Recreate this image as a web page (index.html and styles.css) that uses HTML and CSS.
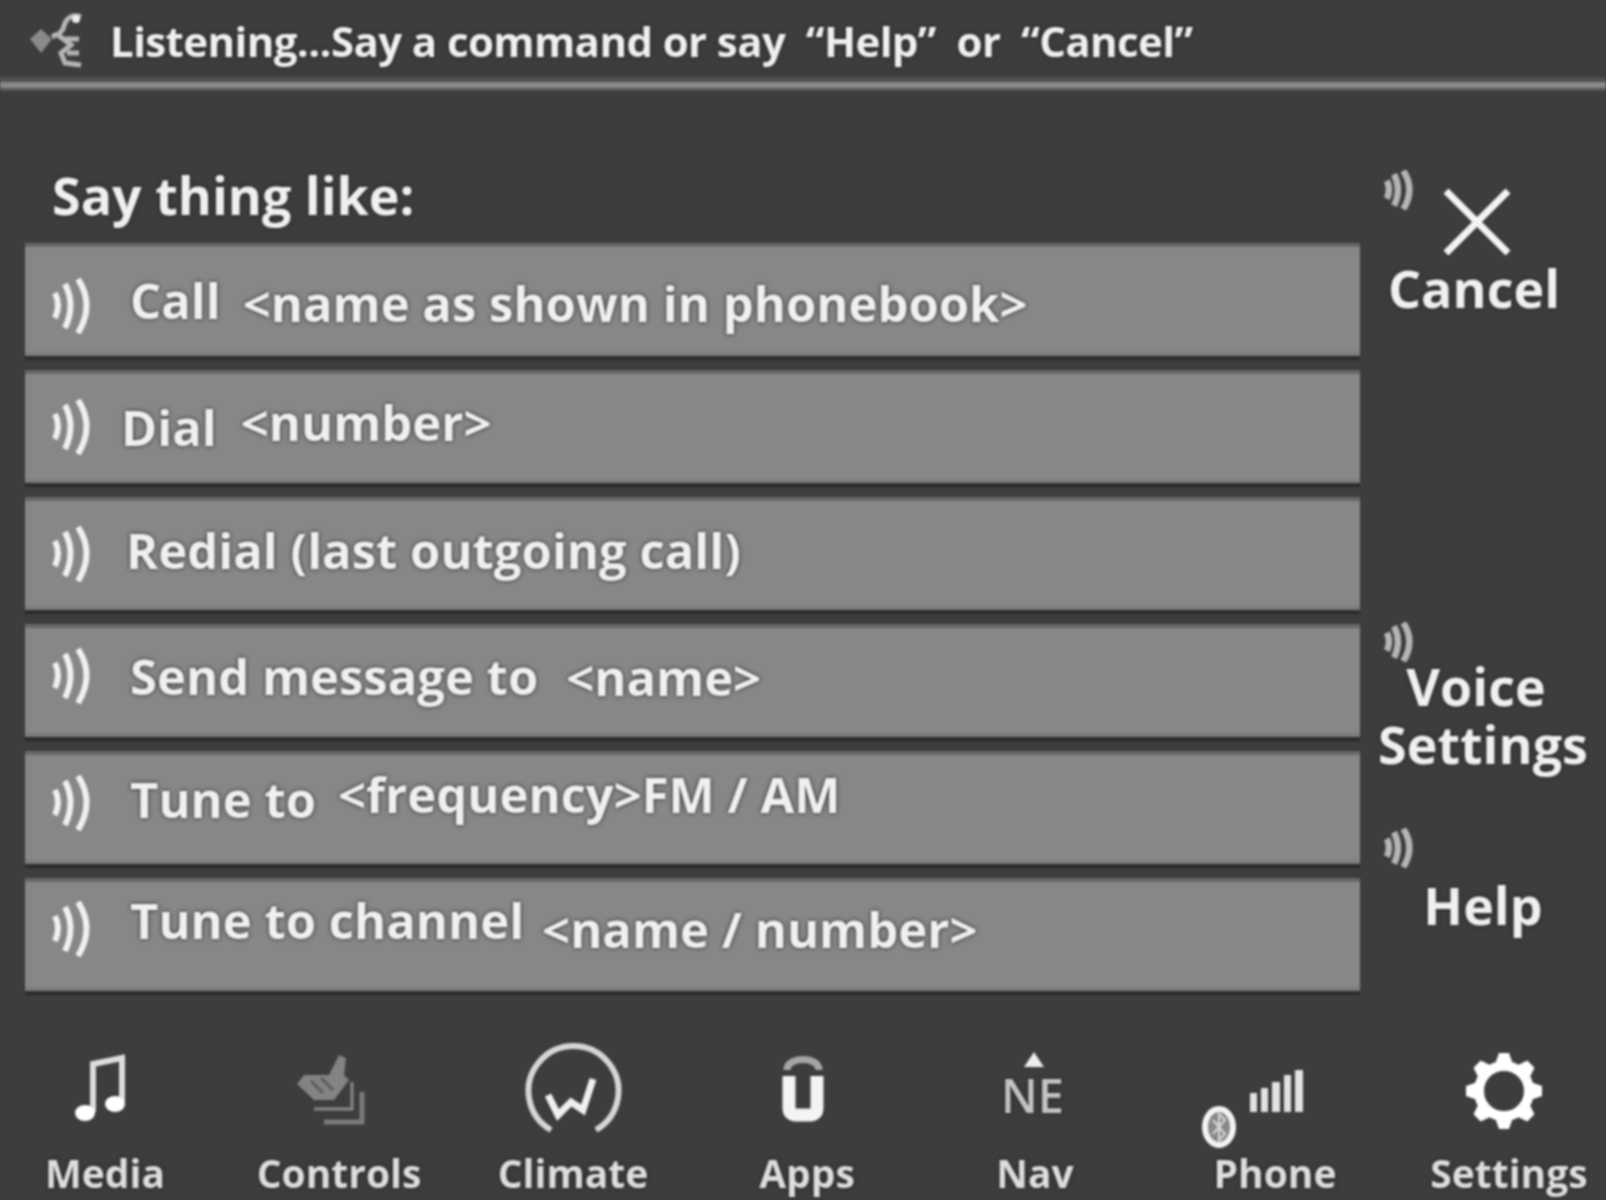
FILE: index.html
```html
<!doctype html>
<html lang="en">
    <head>
        <meta charset="UTF-8" />
        <title>Voice Command</title>
        <link rel="stylesheet" href="styles.css">
    </head>

    <body>
        <div id="screen">
            <svg width="0" height="0" class="defs">
                <symbol id="wave" viewBox="0 0 42 56">
                    <path d="M4 15 Q10 27 4 40 M14 6 Q25 27 14 50 M27 1 Q44 27 27 55" fill="none" stroke="currentColor" />
                </symbol>
            </svg>

            <div id="top">
                <svg class="listen" width="56" height="60" viewBox="0 0 56 60">
                    <path d="M1 30 L12 20 L23 30 L12 44 Z" fill="#8a8a8a" />
                    <path d="M28 25 L23 28 M52 8 Q38 3 34 20 L29 26 L42 36 L32 44 L36 54 L52 56 M36 30 H50 M38 44 H50" fill="none" stroke="#b5b5b5" stroke-width="5" />
                    <circle cx="47" cy="10" r="4" fill="#eee" />
                </svg>
                <span class="toptext">Listening...Say a command or say &nbsp;“Help” &nbsp;or &nbsp;“Cancel”</span>
            </div>
            <div id="rule"></div>

            <div id="main">
                <div id="list">
                    <h1>Say thing like:</h1>
                    <div class="bar r1">
                        <svg class="w"><use href="#wave" /></svg>
                        <span class="cmd">Call</span><span class="arg">&lt;name as shown in phonebook&gt;</span>
                    </div>
                    <div class="bar r2">
                        <svg class="w"><use href="#wave" /></svg>
                        <span class="cmd">Dial</span><span class="arg">&lt;number&gt;</span>
                    </div>
                    <div class="bar r3">
                        <svg class="w"><use href="#wave" /></svg>
                        <span class="cmd">Redial (last outgoing call)</span>
                    </div>
                    <div class="bar r4">
                        <svg class="w"><use href="#wave" /></svg>
                        <span class="cmd">Send message to</span><span class="arg">&lt;name&gt;</span>
                    </div>
                    <div class="bar r5">
                        <svg class="w"><use href="#wave" /></svg>
                        <span class="cmd">Tune to</span><span class="arg">&lt;frequency&gt;FM / AM</span>
                    </div>
                    <div class="bar r6">
                        <svg class="w"><use href="#wave" /></svg>
                        <span class="cmd">Tune to channel</span><span class="arg">&lt;name / number&gt;</span>
                    </div>
                </div>

                <div id="side">
                    <div class="sbtn cancel">
                        <svg class="sw"><use href="#wave" /></svg>
                        <svg class="x" width="68" height="68" viewBox="0 0 68 68">
                            <path d="M3 3 L65 65 M65 3 L3 65" stroke="#f4f4f4" stroke-width="7" />
                        </svg>
                        <div class="slabel">Cancel</div>
                    </div>
                    <div class="sbtn voice">
                        <svg class="sw"><use href="#wave" /></svg>
                        <div class="slabel"><span class="vline">Voice</span><br />Settings</div>
                    </div>
                    <div class="sbtn help">
                        <svg class="sw"><use href="#wave" /></svg>
                        <div class="slabel">Help</div>
                    </div>
                </div>
            </div>

            <div id="tabs">
                <div class="tab">
                    <svg class="ico" viewBox="0 0 186 96">
                        <g transform="translate(5 0)">
                            <path d="M76 72 V24 L105 18 V62" fill="none" stroke="#ddd" stroke-width="6" />
                            <ellipse cx="68" cy="73" rx="10" ry="8" fill="#fff" />
                            <ellipse cx="98" cy="64" rx="10" ry="8" fill="#fff" />
                        </g>
                    </svg>
                    Media
                </div>
                <div class="tab">
                    <svg class="ico" viewBox="0 0 186 96">
                        <g transform="translate(9 0)">
                            <path d="M84 15 L91 18 L89 35 L94 40 L79 60 L59 60 L42 44 L49 35 L74 35 Z" fill="#838383" />
                            <path d="M56 41 L68 53 M66 38 L78 50" stroke="#5c5c5c" stroke-width="3" />
                            <path d="M59 69 H97 V42" fill="none" stroke="#8a8a8a" stroke-width="3" />
                            <path d="M69 82 H107 V52" fill="none" stroke="#7b7b7b" stroke-width="5" />
                        </g>
                    </svg>
                    Controls
                </div>
                <div class="tab">
                    <svg class="ico" viewBox="0 0 186 96">
                        <g transform="translate(1 2)">
                            <path d="M70 88 A45 45 0 1 1 115 88" fill="none" stroke="#d6d6d6" stroke-width="6" />
                            <path d="M67 53 L77 73 L90 60 L102 68 L112 37" fill="none" stroke="#f0f0f0" stroke-width="7" />
                        </g>
                    </svg>
                    Climate
                </div>
                <div class="tab">
                    <svg class="ico" viewBox="0 0 186 96">
                        <g transform="translate(9 0)">
                            <path d="M64 30 C64 16 96 16 96 30" fill="none" stroke="#a5a5a5" stroke-width="7" />
                            <path d="M66 36 V68 Q66 75 73 75 H87 Q94 75 94 68 V36" fill="none" stroke="#f4f4f4" stroke-width="13" />
                        </g>
                    </svg>
                    Apps
                </div>
                <div class="tab nav">
                    <svg class="ico" viewBox="0 0 186 96">
                        <path d="M86 12 L96 27 H76 Z" fill="#eee" />
                        <text x="53" y="73" class="ne">NE</text>
                    </svg>
                    Nav
                </div>
                <div class="tab">
                    <svg class="ico" viewBox="0 0 186 96">
                        <ellipse cx="37" cy="87" rx="14" ry="18" fill="#888" stroke="#f4f4f4" stroke-width="6" />
                        <path d="M31 80 L43 94 L37 100 V74 L43 80 L31 94" fill="none" stroke="#d8d8d8" stroke-width="2" />
                        <path d="M68 72 V53 H75 V72 Z M79 72 V48 H86 V72 Z M90 72 V42 H98 V72 Z M102 72 V35 H109 V72 Z M113 72 V30 H121 V72 Z" fill="#e2e2e2" />
                    </svg>
                    Phone
                </div>
                <div class="tab">
                    <svg class="ico" viewBox="0 0 186 96">
                        <g transform="translate(13 0)">
                            <circle cx="75" cy="51" r="25" fill="none" stroke="#fff" stroke-width="10" />
                            <g fill="#fff">
                                <path d="M64 30 L70 13 H80 L86 30 Z" />
                                <path d="M64 30 L70 13 H80 L86 30 Z" transform="rotate(45 75 51)" />
                                <path d="M64 30 L70 13 H80 L86 30 Z" transform="rotate(90 75 51)" />
                                <path d="M64 30 L70 13 H80 L86 30 Z" transform="rotate(135 75 51)" />
                                <path d="M64 30 L70 13 H80 L86 30 Z" transform="rotate(180 75 51)" />
                                <path d="M64 30 L70 13 H80 L86 30 Z" transform="rotate(225 75 51)" />
                                <path d="M64 30 L70 13 H80 L86 30 Z" transform="rotate(270 75 51)" />
                                <path d="M64 30 L70 13 H80 L86 30 Z" transform="rotate(315 75 51)" />
                            </g>
                        </g>
                    </svg>
                    Settings
                </div>
            </div>
        </div>
    </body>
</html>
```

FILE: styles.css
```css
html, body {
    margin: 0;
    background: #3d3d3d;
    overflow: hidden;
}

#screen {
    width: 1606px;
    height: 1200px;
    font-family: "Open Sans", sans-serif;
    font-weight: 700;
    color: #f0f0f0;
    text-shadow: 0 0 4px #222;
    filter: blur(1.1px);
}

.defs {
    display: block;
    height: 0;
}

#top {
    height: 77px;
    display: flex;
    align-items: center;
    padding-left: 29px;
}

.listen {
    margin-right: 25px;
}

.toptext {
    font-size: 42px;
    letter-spacing: -0.6px;
    padding-top: 4px;
}

#rule {
    height: 6px;
    background: #888;
    border-top: 5px solid #505050;
    border-bottom: 3px solid #585858;
}

#main {
    display: flex;
    height: 949px;
}

#list {
    width: 1335px;
    margin-left: 25px;
}

h1 {
    margin: 0;
    height: 152px;
    padding-left: 27px;
    box-sizing: border-box;
    padding-top: 69px;
    font-size: 52px;
    font-weight: 700;
    line-height: 70px;
}

.bar {
    height: 113px;
    box-sizing: border-box;
    margin-bottom: 14px;
    display: flex;
    align-items: center;
    background: #878787;
    border-top: 4px solid #676767;
    border-bottom: 4px solid #7c7c7c;
    box-shadow: 0 4px 0 #2c2c2c;
    font-size: 49px;
}

.w {
    width: 42px;
    height: 56px;
    margin-left: 26px;
    color: #f0f0f0;
    stroke-width: 6;
}

.cmd {
    margin-left: 37px;
}

.arg {
    margin-left: 22px;
}

/* each row sits a little differently in the original */
.r1 .w {
    margin-top: 12px;
}

.r1 .arg {
    padding-top: 6px;
}

.r2 .cmd {
    margin-left: 28px;
}

.r2 .arg {
    margin-left: 24px;
    padding-bottom: 10px;
}

.r3 .cmd {
    margin-left: 33px;
    padding-bottom: 8px;
}

.r4 .w, .r5 .w {
    margin-bottom: 10px;
}

.r4 .cmd {
    padding-bottom: 10px;
}

.r4 .arg {
    margin-left: 28px;
    padding-bottom: 8px;
}

.r5 .cmd {
    padding-bottom: 18px;
}

.r5 .arg {
    margin-left: 22px;
    padding-bottom: 28px;
}

.r6 .w {
    margin-bottom: 12px;
}

.r6 .cmd {
    padding-bottom: 30px;
}

.r6 .arg {
    margin-left: 18px;
    padding-bottom: 12px;
}

#side {
    width: 246px;
    font-size: 52px;
}

.sbtn {
    display: flex;
    flex-direction: column;
}

.slabel {
    text-align: center;
    line-height: 58px;
}

.sw {
    width: 30px;
    height: 40px;
    margin-left: 24px;
    color: #b5b5b5;
    stroke-width: 9;
}

.cancel {
    padding-top: 79px;
    height: 462px;
    box-sizing: border-box;
}

.x {
    margin-top: -22px;
    margin-left: 83px;
}

.cancel .slabel {
    margin-top: 3px;
    padding-right: 18px;
}

.voice {
    height: 275px;
    box-sizing: border-box;
    padding-top: 69px;
}

.voice .slabel {
    margin-top: -5px;
}

.vline {
    padding-right: 14px;
}

.help .slabel {
    padding-top: 8px;
}

#tabs {
    display: grid;
    grid-template-columns: repeat(7, 186px);
    gap: 48px;
    padding-left: 12px;
}

.tab {
    text-align: center;
    font-size: 39px;
    line-height: 50px;
    color: #dedede;
}

.ico {
    display: block;
    width: 186px;
    height: 96px;
    overflow: visible;
    margin-bottom: 12px;
}

.ne {
    font-size: 47px;
    font-weight: 600;
    fill: #c4c4c4;
}

.nav {
    padding-right: 12px;
}
```
